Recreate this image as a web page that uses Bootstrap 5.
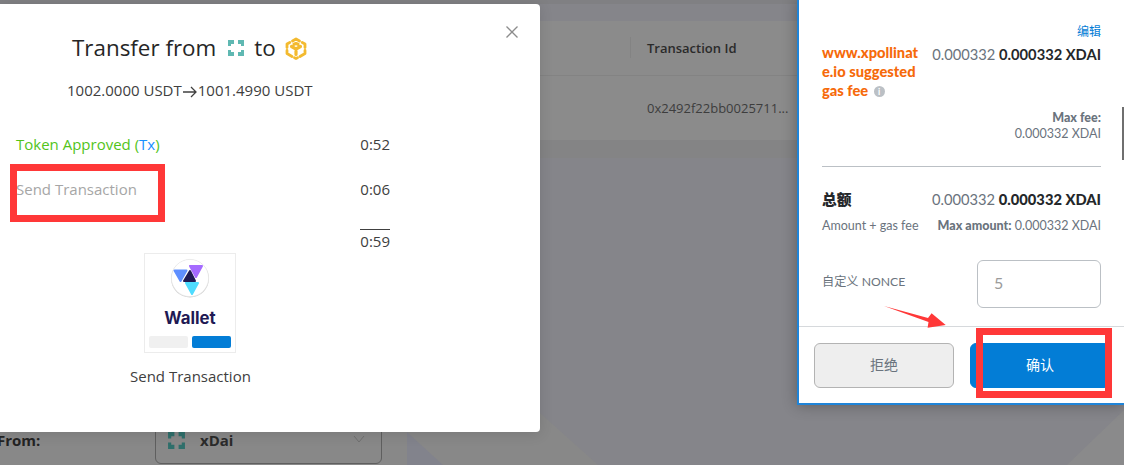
<!DOCTYPE html>
<html lang="en">
<head>
<meta charset="utf-8">
<title>Transfer</title>
<link href="https://cdn.jsdelivr.net/npm/bootstrap@5.3.0/dist/css/bootstrap.min.css" rel="stylesheet">
<style>
html,body{height:100%;}
body{margin:0;background:#85858a;font-family:"Open Sans","Liberation Sans","Noto Sans CJK SC",sans-serif;overflow:hidden;}
.stage{position:relative;width:1124px;height:465px;overflow:hidden;background:#85858a;}
.topstrip{position:absolute;left:0;top:0;width:798px;height:4px;background:#808083;}
.bgtable{position:absolute;left:406px;top:21px;width:392px;height:119px;background:#8b8b8b;}
.bgband{position:absolute;left:406px;top:140px;width:392px;height:18px;background:#848485;}
.bgtable-head{height:55px;border-bottom:1px solid #838383;display:flex;align-items:center;padding:2px 0 0 241px;font-size:13px;font-weight:600;color:#2a2a2a;position:relative;}
.bgtable-head::before{content:"";position:absolute;left:224px;top:16px;height:21px;width:1px;background:#838383;}
.bgtable-cell{padding:23px 0 0 241px;font-size:13px;line-height:18px;color:#3d3d3d;white-space:nowrap;}
.leftbottom{position:absolute;left:0;top:432px;width:407px;height:33px;background:#888;}
.foldleft{position:absolute;left:407px;top:413px;width:191px;height:52px;background:#888;clip-path:polygon(133px 0,100% 100%,0 100%,0 19px);}
.foldblue{position:absolute;left:407px;top:432px;width:36px;height:33px;background:#82838c;clip-path:polygon(0 0,100% 100%,0 100%);}
.rightfold{position:absolute;left:1067px;top:410px;width:57px;height:55px;background:#8a8a8b;clip-path:polygon(100% 0,100% 100%,0 100%);}
.fromlabel{position:absolute;left:-3px;top:429px;font-weight:700;font-size:15px;line-height:22px;color:#232323;}
.chainsel{position:absolute;left:155px;top:420px;width:227px;height:44px;border:1px solid #5f5f5f;border-radius:6px;display:flex;align-items:center;padding:0 0 3px 11px;gap:14px;font-weight:700;font-size:15px;color:#2b2b2b;}
.chainsel svg.chev{position:absolute;right:16px;top:14px;}
.xferbox{position:absolute;left:0;top:4px;width:540px;height:428px;background:#fff;border-radius:0 4px 4px 0;padding-top:28px;box-shadow:0 2px 14px rgba(0,0,0,.12);}
.xclose{position:absolute;left:506px;top:22px;line-height:0;}
.xtitle{margin:0 0 0 72px;font-size:22.4px;line-height:32px;font-weight:500;color:#262626;display:flex;align-items:center;white-space:nowrap;}
.ic-teal{margin:0 9px 0 11px;}
.ic-bnb{margin-left:8px;}
.amounts{margin:15px 0 0 67px;font-size:15px;line-height:22px;color:#404040;white-space:nowrap;}
.step{margin-left:16px;width:374px;display:flex;justify-content:space-between;font-size:15px;line-height:22px;color:#404040;}
.step-a{margin-top:32px;}
.step-b{margin-top:23px;}
.step-c{margin-top:29px;}
.approved{color:#52c41a;}
.txlink{color:#1890ff;}
.pendingstep{color:#a6a6a6;}
.total{border-top:1px solid #404040;}
.walletwrap{margin:1px 0 0 130px;width:120px;text-align:center;}
.walletthumb{width:92px;height:100px;margin:0 auto;border:1px solid #ececec;display:flex;flex-direction:column;align-items:center;padding-top:4px;}
.walletname{font-family:Inter,"Liberation Sans",sans-serif;font-weight:700;font-size:16.800px;line-height:20px;color:#1f1a54;margin-top:9px;}
.thumbbtns{display:flex;gap:4px;margin-top:8px;}
.thumbbtns span{display:block;width:39px;height:12px;border-radius:2px;background:#f0f0f0;}
.thumbbtns span+span{background:#037dd6;}
.walletcap{margin-top:12px;font-size:15px;line-height:22px;color:#404040;white-space:nowrap;}
.redbox{position:absolute;border:7px solid #ff3838;}
.rb-left{left:10px;top:164px;width:155px;height:58px;}
.rb-right{left:976px;top:328px;width:136px;height:70px;}
.mm{position:absolute;left:797px;top:-2px;width:327px;height:407px;background:#fff;border:solid #1f84d8;border-width:0 0 2px 2px;box-shadow:0 0 14px rgba(0,0,0,.32);font-family:Lato,"Noto Sans CJK SC",sans-serif;font-size:14.700px;color:#24272a;display:flex;flex-direction:column;}
.mm-body{padding:0 23px;flex:1 1 auto;min-height:0;}
.editlink{text-align:right;color:#037dd6;font-size:12px;line-height:16px;padding-top:26px;}
.feerow{display:flex;justify-content:space-between;margin-top:3px;}
.sitename{font-weight:900;color:#f66a0a;line-height:19px;font-size:14.700px;white-space:nowrap;}
.infoi{display:inline-block;width:11px;height:11px;border-radius:50%;background:#bbc0c5;color:#fff;font-size:9px;line-height:11px;text-align:center;vertical-align:1px;margin-left:2px;font-weight:700;}
.grey{color:#6a737d;}
.maxfee{text-align:right;font-size:12.500px;line-height:16px;color:#6a737d;margin-top:10px;}
.maxfee b{display:block;font-weight:900;}
.mm-sep{border-top:1px solid #bbc0c5;margin-top:24px;}
.totalrow{display:flex;justify-content:space-between;margin-top:23px;line-height:18px;}
.totalrow strong{font-weight:900;}
.subrow{display:flex;justify-content:space-between;font-size:12.500px;line-height:16px;margin-top:10px;color:#6a737d;}
.subrow b{font-weight:900;}
.noncerow{display:flex;justify-content:space-between;align-items:flex-start;margin-top:26px;}
.noncelabel{font-size:12.200px;color:#6a737d;margin-top:14px;line-height:16px;}
.nonceinput.form-control{width:124px;height:48px;border:1px solid #bbc0c5;border-radius:6px;color:#9b9b9b;font-size:16px;padding:0 16px 3px;font-family:inherit;background:#fff;}
.mm-foot{flex:0 0 77px;border-top:1px solid #d6d9dc;padding:16px 0 0 15px;display:flex;gap:16px;}
.mmbtn{width:140px;height:45px;border-radius:6px;font-size:14px;line-height:1;padding:0 0 2px;}
.mmbtn.reject{background:#eee;border:1px solid #b3b3b3;color:#6a737d;}
.mmbtn.confirm{background:#037dd6;border:1px solid #037dd6;color:#fff;}
.arrowmark{position:absolute;left:883px;top:306px;line-height:0;}
.scrollnub{position:absolute;left:1122px;top:107px;width:2px;height:53px;background:#6f6f6f;}
</style>
</head>
<body>
<div class="stage">
  <div class="topstrip"></div>
  <div class="leftbottom"></div>
  <div class="foldleft"></div>
  <div class="foldblue"></div>
  <div class="rightfold"></div>
  <div class="bgtable">
    <div class="bgtable-head">Transaction Id</div>
    <div class="bgtable-cell">0x2492f22bb0025711...</div>
  </div>
  <div class="bgband"></div>
  <div class="fromlabel">From:</div>
  <div class="chainsel">
    <svg width="19" height="19" viewBox="0 0 18 18" fill="#2f6f6b"><path d="M1 1h6v4H4v2H1zM11 1h6v6h-3V5h-3zM1 11h3v2h3v4H1zM14 11h3v6h-6v-4h3z"/></svg>
    <span>xDai</span>
    <svg class="chev" width="12" height="8" viewBox="0 0 12 8" fill="none" stroke="#707070"><path d="M1 1l5 6 5-6"/></svg>
  </div>

  <div class="xferbox">
    <div class="xclose"><svg width="12" height="12" viewBox="0 0 12 12" fill="none" stroke="#8c8c8c" stroke-width="1.300"><path d="M.5.500l11 11M11.500.500l-11 11"/></svg></div>
    <h5 class="xtitle">Transfer from<svg class="ic-teal" width="18" height="18" viewBox="0 0 18 18" fill="#5fb8b2"><path d="M1 1h6v4H4v2H1zM11 1h6v6h-3V5h-3zM1 11h3v2h3v4H1zM14 11h3v6h-6v-4h3z"/></svg>to<svg class="ic-bnb" width="24" height="25" viewBox="0 0 24 24" fill="none" stroke="#f3ba2f" stroke-width="2.800" stroke-linejoin="round" stroke-linecap="round"><path d="M8.500 4.500L12 2.500l3.500 2M3 11V7.500L5.800 6M21 11V7.500L18.200 6M3 14v3l5 3M21 14v3l-5 3M10.500 21.300l1.500.7 1.500-.7"/><path d="M7.500 10L12 12.500 16.500 10M12 12.500V18M10 7.800L12 7l2 .8" stroke-width="3.200"/></svg></h5>
    <p class="amounts mb-0">1002.0000 USDT<svg width="16" height="12" viewBox="0 0 16 12" fill="none" stroke="#404040" stroke-width="1.300"><path d="M1 6h13M9 1l5 5-5 5"/></svg>1001.4990 USDT</p>

    <div class="step step-a"><span class="approved">Token Approved (<span class="txlink">Tx</span>)</span><span>0:52</span></div>
    <div class="step step-b"><span class="pendingstep">Send Transaction</span><span>0:06</span></div>
    <div class="step step-c"><span></span><span class="total">0:59</span></div>

    <div class="walletwrap">
      <div class="walletthumb">
        <svg width="40" height="41" viewBox="0 0 40 41" stroke-linejoin="round"><circle cx="20" cy="20.500" r="19" fill="#d0d0d0"/><circle cx="20" cy="20" r="18.600" fill="#fff" stroke="#e6e6e6" stroke-width=".6"/><path d="M4.500 12.500h12l-6 10.500z" fill="#5f8fff" stroke="#5f8fff" stroke-width="2"/><path d="M20 8h12l-6 11z" fill="#a56bff" stroke="#a56bff" stroke-width="2"/><path d="M16 25h12l-6 11z" fill="#4fdcff" stroke="#4fdcff" stroke-width="2"/><path d="M20 13l5 10H14z" fill="#1f1a54" stroke="#1f1a54" stroke-width="2"/></svg>
        <div class="walletname">Wallet</div>
        <div class="thumbbtns"><span></span><span></span></div>
      </div>
      <div class="walletcap">Send Transaction</div>
    </div>
  </div>

  <div class="mm">
    <div class="mm-body">
      <div class="editlink">编辑</div>
      <div class="feerow">
        <div class="sitename">www.xpollinat<br>e.io suggested<br>gas fee <span class="infoi">i</span></div>
        <div class="text-end text-nowrap"><span class="grey">0.000332</span> <strong>0.000332 XDAI</strong></div>
      </div>
      <div class="maxfee"><b>Max fee:</b>0.000332 XDAI</div>
      <div class="mm-sep"></div>
      <div class="totalrow"><strong>总额</strong><span><span class="grey">0.000332</span> <strong>0.000332 XDAI</strong></span></div>
      <div class="subrow"><span>Amount + gas fee</span><span><b>Max amount:</b> 0.000332 XDAI</span></div>
      <div class="noncerow"><div class="noncelabel">自定义 NONCE</div><input class="form-control nonceinput" value="5" aria-label="nonce"></div>
    </div>
    <div class="mm-foot">
      <button class="btn mmbtn reject" type="button">拒绝</button>
      <button class="btn mmbtn confirm" type="button">确认</button>
    </div>
  </div>
  <div class="scrollnub"></div>

  <div class="redbox rb-left"></div>
  <div class="redbox rb-right"></div>
  <div class="arrowmark"><svg width="64" height="24" viewBox="0 0 64 24" fill="#ff3838"><path d="M1 0L45 12 48.600 7.300 62.700 19 44.600 21.700 45.500 16z"/></svg></div>
</div>
</body>
</html>
